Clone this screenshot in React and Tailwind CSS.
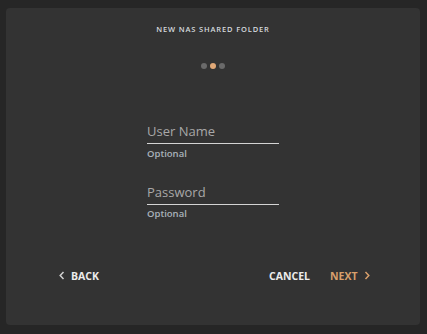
export default function App() {
  const font = { fontFamily: '"Open Sans", "Liberation Sans", sans-serif' };

  const Field = ({ label, className = '' }) => (
    <div className={`w-[132px] ${className}`}>
      <div className="border-b border-[#d4d4d4] pb-[3px]">
        <div className="h-[18px] text-[13px] leading-[18px] text-[#a8a8a8]">{label}</div>
      </div>
      <div className="mt-[2.5px] text-[9.5px] leading-[14px] font-semibold text-[#a9b2ba]">Optional</div>
    </div>
  );

  return (
    <div className="w-[427px] h-[334px] bg-[#262626] pt-[8px] pl-[6px]" style={font}>
      <div className="w-[414px] h-[317px] bg-[#333333] rounded-[4px] flex flex-col items-center pt-[15px]">
        <div className="text-[7.5px] leading-[12px] font-semibold tracking-[0.85px] text-[#d6dadf]">
          NEW NAS SHARED FOLDER
        </div>

        <div className="mt-[28px] flex gap-[3px]">
          <span className="w-[6px] h-[6px] rounded-full bg-[#6a6a6a]" />
          <span className="w-[6px] h-[6px] rounded-full bg-[#e0a877]" />
          <span className="w-[6px] h-[6px] rounded-full bg-[#6a6a6a]" />
        </div>

        <Field label="User Name" className="mt-[53px]" />
        <Field label="Password" className="mt-[22px]" />

        <div className="mt-[46.5px] w-full flex items-center pl-[53px] pr-[50px] text-[10.5px] leading-[16px] font-bold">
          <button className="flex items-center gap-[6px] text-[#ececec]">
            <svg width="6" height="9" viewBox="0 0 6 9" fill="none">
              <polyline points="4.5,1 1.2,4.5 4.5,8" stroke="#d0d0d0" strokeWidth="1.5" />
            </svg>
            BACK
          </button>
          <div className="ml-auto flex items-center gap-[20px]">
            <button className="text-[#ececec]">CANCEL</button>
            <button className="flex items-center gap-[6.5px] text-[#d9a06c]">
              NEXT
              <svg width="6" height="9" viewBox="0 0 6 9" fill="none">
                <polyline points="1.5,1 4.8,4.5 1.5,8" stroke="#d9a06c" strokeWidth="1.5" />
              </svg>
            </button>
          </div>
        </div>
      </div>
    </div>
  );
}
